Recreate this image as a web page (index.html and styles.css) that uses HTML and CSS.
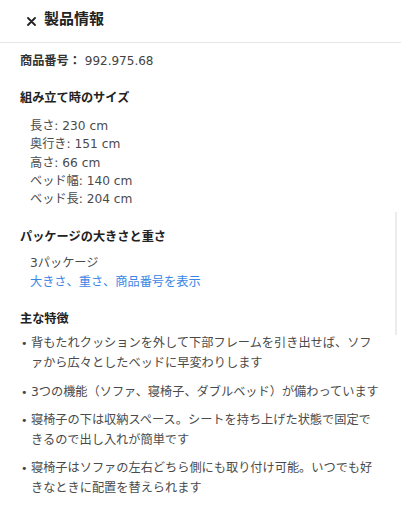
FILE: index.html
```html
<!DOCTYPE html>
<html lang="ja">
<head>
<meta charset="utf-8">
<title>製品情報</title>
<link rel="stylesheet" href="styles.css">
</head>
<body>
<div class="page">
  <header class="topbar">
    <svg class="close" width="9" height="9" viewBox="0 0 9 9" aria-hidden="true"><path d="M1 1L8 8M8 1L1 8" stroke="#222" stroke-width="1.8" stroke-linecap="round"/></svg>
    <h1 class="title">製品情報</h1>
  </header>
  <main class="content">
    <p class="sku"><span class="sku-label">商品番号：</span> 992.975.68</p>

    <h2 class="heading h-size">組み立て時のサイズ</h2>
    <ul class="dims">
      <li>長さ: 230 cm</li>
      <li>奥行き: 151 cm</li>
      <li>高さ: 66 cm</li>
      <li>ベッド幅: 140 cm</li>
      <li>ベッド長: 204 cm</li>
    </ul>

    <h2 class="heading h-pack">パッケージの大きさと重さ</h2>
    <div class="pack">
      <p class="pack-count">3パッケージ</p>
      <a class="pack-link" href="#">大きさ、重さ、商品番号を表示</a>
    </div>

    <h2 class="heading h-feat">主な特徴</h2>
    <ul class="features">
      <li>背もたれクッションを外して下部フレームを引き出せば、ソファから広々としたベッドに早変わりします</li>
      <li>3つの機能（ソファ、寝椅子、ダブルベッド）が備わっています</li>
      <li>寝椅子の下は収納スペース。シートを持ち上げた状態で固定できるので出し入れが簡単です</li>
      <li>寝椅子はソファの左右どちら側にも取り付け可能。いつでも好きなときに配置を替えられます</li>
    </ul>
  </main>
  <div class="scrollbar"></div>
</div>
</body>
</html>
```

FILE: styles.css
```css
* { box-sizing: border-box; }
html, body { margin: 0; padding: 0; background: #fff; }
body {
  font-family: "DejaVu Sans", "Noto Sans CJK JP", sans-serif;
  color: #4a4a4a;
  font-size: 12.2px;
}
.page { position: relative; width: 401px; min-height: 512px; }
.topbar {
  height: 43px;
  border-bottom: 1px solid #e6e6e6;
  display: flex;
  align-items: center;
  padding-left: 27px;
  gap: 8px;
}
.close { flex: 0 0 auto; margin-top: 1px; }
.title {
  margin: 0;
  font-family: "Noto Sans CJK JP", sans-serif;
  font-size: 15px;
  font-weight: 700;
  color: #222;
  line-height: 20px;
  margin-top: -6px;
}
.content { padding: 0 20px; }
.sku {
  margin: 8px 0 0;
  line-height: 20px;
  height: 20px;
  color: #444;
  font-size: 12px;
}
.sku-label { font-weight: 700; color: #333; font-size: 12.2px; }
.heading {
  margin: 0;
  font-size: 12.2px;
  font-weight: 700;
  color: #222;
  line-height: 20px;
  height: 20px;
}
.h-size { margin-top: 17px; }
.h-pack { margin-top: 19px; }
.h-feat { margin-top: 17px; }
.dims {
  list-style: none;
  margin: 9px 0 0;
  padding: 0 0 0 10px;
  line-height: 18.3px;
  font-size: 12.2px;
}
.dims li { height: 18.3px; }
.pack { margin-top: 7px; padding-left: 10px; line-height: 19px; font-size: 12.2px; }
.pack-count { margin: 0; height: 19px; }
.pack-link { color: #3a86e6; text-decoration: none; display: block; height: 19px; }
.features {
  list-style: none;
  margin: 5px 0 0;
  padding: 0;
  line-height: 19.6px;
}
.features li { display: flex; margin-bottom: 9px; }
.features li::before {
  content: "•";
  flex: 0 0 10px;
  padding-left: 1px;
  color: #444;
  font-size: 11px;
}
.scrollbar {
  position: absolute;
  left: 395px;
  top: 212px;
  width: 2px;
  height: 123px;
  background: #ececec;
}
```
